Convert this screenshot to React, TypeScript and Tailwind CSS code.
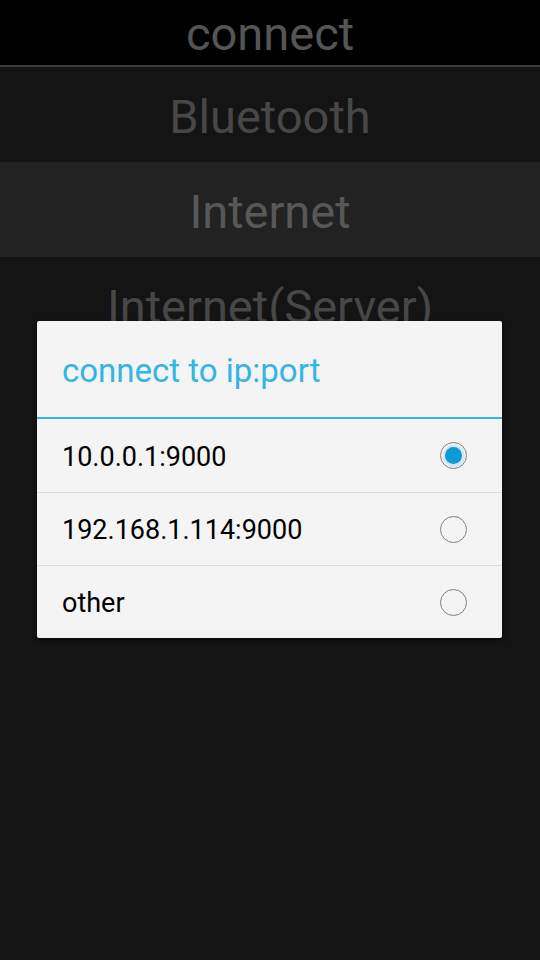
import { useState } from "react";

const options = ["10.0.0.1:9000", "192.168.1.114:9000", "other"];

function Radio({ checked }: { checked: boolean }) {
  return (
    <div className="w-[27px] h-[27px] rounded-full border-[1.5px] border-[#7f7f7f] flex items-center justify-center">
      {checked && (
        <div className="w-[22px] h-[22px] rounded-full bg-[#cfe9f4] flex items-center justify-center">
          <div className="w-[17px] h-[17px] rounded-full bg-[#0f99d6]" />
        </div>
      )}
    </div>
  );
}

export default function App() {
  const [selected, setSelected] = useState(0);

  return (
    <div className="relative w-[540px] h-[960px] bg-[#141414] overflow-hidden font-['Roboto',sans-serif]">
      <div className="h-[65px] bg-black flex items-center justify-center text-[47px] text-[#555555] leading-none pt-[2px]">
        connect
      </div>
      <div className="h-[2px] bg-[#3d3d3d]" />
      <div className="h-[95px] flex items-center justify-center pt-[5px] text-[47px] text-[#474747]">
        Bluetooth
      </div>
      <div className="h-[95px] bg-[#222222] flex items-center justify-center pt-[5px] text-[47px] text-[#585858]">
        Internet
      </div>
      <div className="h-[95px] flex items-center justify-center pt-[5px] text-[47px] text-[#474747]">
        Internet(Server)
      </div>

      <div className="absolute left-[37px] top-[321px] w-[465px] bg-[#f4f4f4] rounded-[2px] shadow-[0_2px_4px_rgba(0,0,0,0.6)]">
        <div className="h-[96px] flex items-center pl-[25px] pt-[4px] text-[33px] text-[#33b5e5]">
          connect to ip:port
        </div>
        <div className="h-[2px] bg-[#33b5e5]" />
        {options.map((o, i) => (
          <div
            key={o}
            onClick={() => setSelected(i)}
            className={
              "h-[73px] flex items-center justify-between pl-[25px] pr-[35px] text-[27px] text-black" +
              (i > 0 ? " border-t border-[#dcdcdc]" : "")
            }
          >
            <span className="pt-[3px]">{o}</span>
            <Radio checked={selected === i} />
          </div>
        ))}
      </div>
    </div>
  );
}
